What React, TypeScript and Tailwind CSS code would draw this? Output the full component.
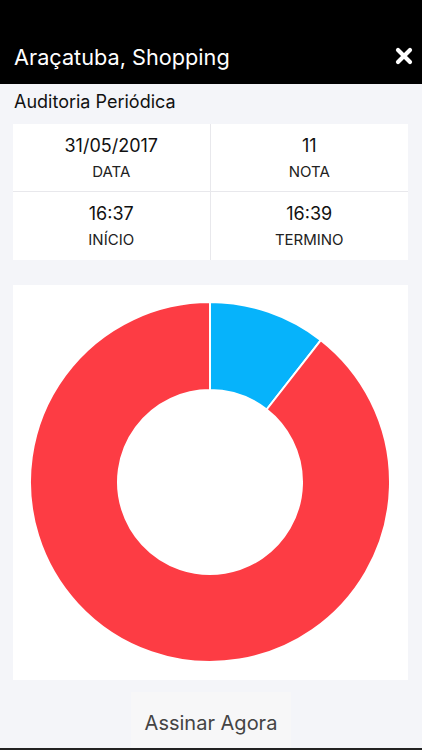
import React from "react";

const cx = 210;
const cy = 482;
const R = 180;
const r = 92;

function pt(angleDeg: number, rad: number) {
  const a = ((angleDeg - 90) * Math.PI) / 180;
  return [cx + rad * Math.cos(a), cy + rad * Math.sin(a)];
}

function arcPath(a0: number, a1: number) {
  const [x0, y0] = pt(a0, R);
  const [x1, y1] = pt(a1, R);
  const [x2, y2] = pt(a1, r);
  const [x3, y3] = pt(a0, r);
  const large = a1 - a0 > 180 ? 1 : 0;
  return `M${x0} ${y0} A${R} ${R} 0 ${large} 1 ${x1} ${y1} L${x2} ${y2} A${r} ${r} 0 ${large} 0 ${x3} ${y3} Z`;
}

function Cell({ value, label, right, bottom }: { value: string; label: string; right?: boolean; bottom?: boolean }) {
  return (
    <div
      className={`flex flex-col items-center justify-center h-[68px] ${right ? "border-r border-[#e8e8ec]" : ""} ${bottom ? "border-b border-[#e8e8ec]" : ""}`}
    >
      <div className="text-[18px] leading-[22px] text-[#111]">{value}</div>
      <div className="text-[15px] leading-[18px] mt-[6px] text-[#222]">{label}</div>
    </div>
  );
}

export default function App() {
  const split = 38;
  return (
    <div
      className="w-[422px] h-[750px] bg-[#f4f5f9] flex flex-col overflow-hidden"
      style={{ fontFamily: "Inter, 'Liberation Sans', Arial, sans-serif" }}
    >
      <div className="h-[84px] bg-black flex items-end justify-between pl-[14px] pr-[9px] pb-[14px]">
        <div className="text-white text-[21.7px] leading-[26px]">Araçatuba, Shopping</div>
        <svg width="18" height="18" viewBox="0 0 18 18" className="mb-[5px]">
          <path d="M3 3 L15 15 M15 3 L3 15" stroke="white" strokeWidth="4.2" strokeLinecap="round" />
        </svg>
      </div>
      <div className="px-[14px] pt-[7px] text-[18px] leading-[21px] text-[#111]">Auditoria Periódica</div>
      <div className="mx-[13px] mt-[12px] w-[395px] bg-white grid grid-cols-2">
        <Cell value="31/05/2017" label="DATA" right bottom />
        <Cell value="11" label="NOTA" bottom />
        <Cell value="16:37" label="INÍCIO" right />
        <Cell value="16:39" label="TERMINO" />
      </div>
      <div className="mx-[13px] mt-[25px] w-[395px] h-[395px] bg-white">
        <svg width="395" height="395" viewBox="13 285 395 395">
          <path d={arcPath(0, split)} fill="#06b3fb" stroke="white" strokeWidth="2" />
          <path d={arcPath(split, 360)} fill="#fd3c44" stroke="white" strokeWidth="2" />
        </svg>
      </div>
      <div className="flex-1 flex justify-center mt-[12px] border-b-2 border-[#222]">
        <div className="w-[160px] h-full bg-[#f7f7f8] flex items-center justify-center pt-[6px] text-[20px] text-[#444]">
          Assinar Agora
        </div>
      </div>
    </div>
  );
}
